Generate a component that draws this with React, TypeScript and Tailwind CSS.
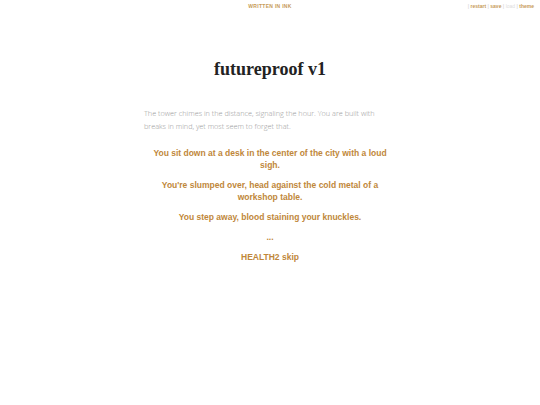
import React from 'react';

const choices = [
  'You sit down at a desk in the center of the city with a loud sigh.',
  "You're slumped over, head against the cold metal of a workshop table.",
  'You step away, blood staining your knuckles.',
  '...',
  'HEALTH2 skip',
];

export default function App() {
  return (
    <div className="relative w-[540px] h-[405px] bg-white overflow-hidden">
      <div className="flex justify-center pt-[3px]">
        <span className="text-[5px] font-bold tracking-[0.3px] text-[#c69a58] font-['Liberation_Sans',sans-serif]">
          WRITTEN IN INK
        </span>
      </div>
      <div className="absolute top-[3px] right-[6px] text-[5px] font-bold font-['Liberation_Sans',sans-serif] text-[#c69a58]">
        <span className="text-[#ddd]">| </span>restart<span className="text-[#ddd]"> | </span>save
        <span className="text-[#ddd]"> | </span>
        <span className="text-[#ddd] font-normal">load</span>
        <span className="text-[#ddd]"> | </span>theme
      </div>

      <h1 className="mt-[44px] text-center text-[18px] leading-[28px] font-bold text-[#222] font-['Liberation_Serif',serif]">
        futureproof v1
      </h1>

      <div className="mt-[24px] w-[252px] ml-[144px]">
        <p className="text-[7.3px] leading-[13px] text-[#999] font-['Open_Sans',sans-serif] font-light">
          The tower chimes in the distance, signaling the hour. You are built with breaks in mind, yet most seem to
          forget that.
        </p>
        <div className="mt-[14px] flex flex-col gap-[8px]">
          {choices.map((c) => (
            <p
              key={c}
              className="text-center text-[8.5px] leading-[12px] font-bold text-[#c0873a] font-['Liberation_Sans',sans-serif]"
            >
              {c}
            </p>
          ))}
        </div>
      </div>
    </div>
  );
}
